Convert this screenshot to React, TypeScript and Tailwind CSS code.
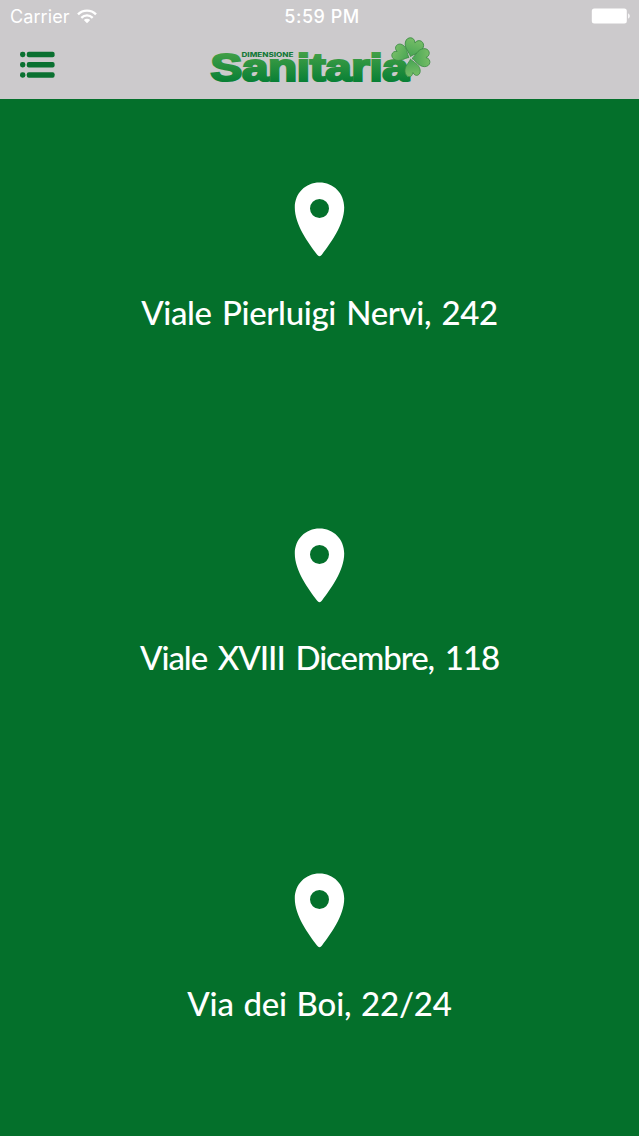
interface Store {
  address: string;
  spacing: string;
}

const stores: Store[] = [
  { address: "Viale Pierluigi Nervi, 242", spacing: "tracking-[-0.35px] [word-spacing:2.3px]" },
  { address: "Viale XVIII Dicembre, 118", spacing: "tracking-[-1.05px] [word-spacing:3.4px]" },
  { address: "Via dei Boi, 22/24", spacing: "tracking-[-0.2px] [word-spacing:1.6px]" },
];

function WifiIcon() {
  return (
    <svg width="20" height="15" viewBox="0 0 20 15" fill="none" stroke="white" strokeWidth="2.4">
      <path d="M1 5.4C6 .4 14 .4 19 5.4" />
      <path d="M4.3 8.8c3.3-3.2 8.1-3.2 11.4 0" />
      <path d="M10 14.2 6.8 11c1.8-1.7 4.6-1.7 6.4 0Z" fill="white" stroke="none" />
    </svg>
  );
}

function BatteryIcon() {
  return (
    <svg width="40" height="18" viewBox="0 0 40 18" fill="white">
      <rect x="0.8" y="0.5" width="35" height="15" rx="2.5" />
      <path d="M37.2 5.5c2 .5 2 4.5 0 5Z" />
    </svg>
  );
}

function MenuIcon() {
  return (
    <svg width="36" height="28" viewBox="0 0 36 28" fill="#0a7030">
      {[0.8, 11, 21.3].map((y) => (
        <g key={y}>
          <rect x="0" y={y} width="5.4" height="5.4" rx="2.4" />
          <rect x="6.8" y={y} width="27.8" height="5.4" rx="2" />
        </g>
      ))}
    </svg>
  );
}

function Logo() {
  const leaf = "M0 0C-3-4-9-6-9.5-12C-10-18-2-20 0-14C2-20 10-18 9.5-12C9-6 3-4 0 0Z";
  return (
    <svg width="226" height="60" viewBox="0 0 226 60" className="overflow-visible">
      <defs>
        <linearGradient id="word" x1="0" y1="18" x2="0" y2="48" gradientUnits="userSpaceOnUse">
          <stop offset="0" stopColor="#43a047" />
          <stop offset="1" stopColor="#087f35" />
        </linearGradient>
        <linearGradient id="leaf" x1="0" y1="0" x2="0" y2="1">
          <stop offset="0" stopColor="#76bd67" />
          <stop offset="1" stopColor="#47a553" />
        </linearGradient>
      </defs>
      <text x="3.5" y="47.2" textLength="198" lengthAdjust="spacingAndGlyphs" fill="url(#word)" stroke="url(#word)" strokeWidth="2.2" className="font-['Liberation_Sans'] text-[38px] font-bold tracking-[-0.3px]">
        Sanitaria
      </text>
      <text x="34.5" y="22.8" textLength="52" lengthAdjust="spacingAndGlyphs" fill="#15793a" className="font-['Inter'] text-[6.2px] font-extrabold">
        DIMENSIONE
      </text>
      <g fill="url(#leaf)" stroke="#3b8a43" strokeWidth="0.8">
        <path d={leaf} transform="translate(203.5 25) rotate(170) scale(.8 .98)" />
        <path d={leaf} transform="translate(202 23.5) rotate(-63) scale(.88 .95)" />
        <path d={leaf} transform="translate(203.5 22.5) rotate(18) scale(.98 1.02)" />
        <path d={leaf} transform="translate(205 24.5) rotate(86) scale(.95 1)" />
      </g>
    </svg>
  );
}

function PinIcon() {
  return (
    <svg width="50" height="75" viewBox="0 0 50 75" fill="white" className="overflow-visible">
      <path fillRule="evenodd" d="M24.5 .5C10.5 .5-.2 11.2-.2 25.5-.2 43 13.5 61 22 72.5Q24.5 76 27 72.5C35.5 61 49.2 43 49.2 25.5 49.2 11.2 38.5 .5 24.5 .5ZM24.5 17a9.5 9.5 0 1 1 0 19 9.5 9.5 0 0 1 0-19Z" />
    </svg>
  );
}

export default function App() {
  return (
    <main className="flex h-[1136px] w-[639px] flex-col overflow-hidden bg-[#04702b] text-white">
      <header className="h-[99px] shrink-0 bg-[#cccacc] font-['Inter',sans-serif]">
        <div className="grid h-[33px] grid-cols-3 items-center pr-[8px] pl-[10px]">
          <div className="flex items-center gap-[7px]">
            <span className="text-[18px] tracking-[0.1px]">Carrier</span>
            <WifiIcon />
          </div>
          <span className="pl-[3px] text-center text-[18px] font-medium tracking-[0.5px]">5:59 PM</span>
          <div className="flex justify-end">
            <BatteryIcon />
          </div>
        </div>
        <div className="flex h-[62px] items-start pt-px pl-[19.5px]">
          <button aria-label="Menu" className="mt-[17px]">
            <MenuIcon />
          </button>
          <div className="ml-[151px]">
            <Logo />
          </div>
        </div>
      </header>

      <section className="grid flex-1 grid-rows-3">
        {stores.map((store) => (
          <div key={store.address} className="flex flex-col items-center pt-[83px]">
            <PinIcon />
            <p className={`mt-[34.5px] font-['Lato',sans-serif] text-[33px] leading-[40px] font-medium whitespace-nowrap ${store.spacing}`}>
              {store.address}
            </p>
          </div>
        ))}
      </section>
    </main>
  );
}
